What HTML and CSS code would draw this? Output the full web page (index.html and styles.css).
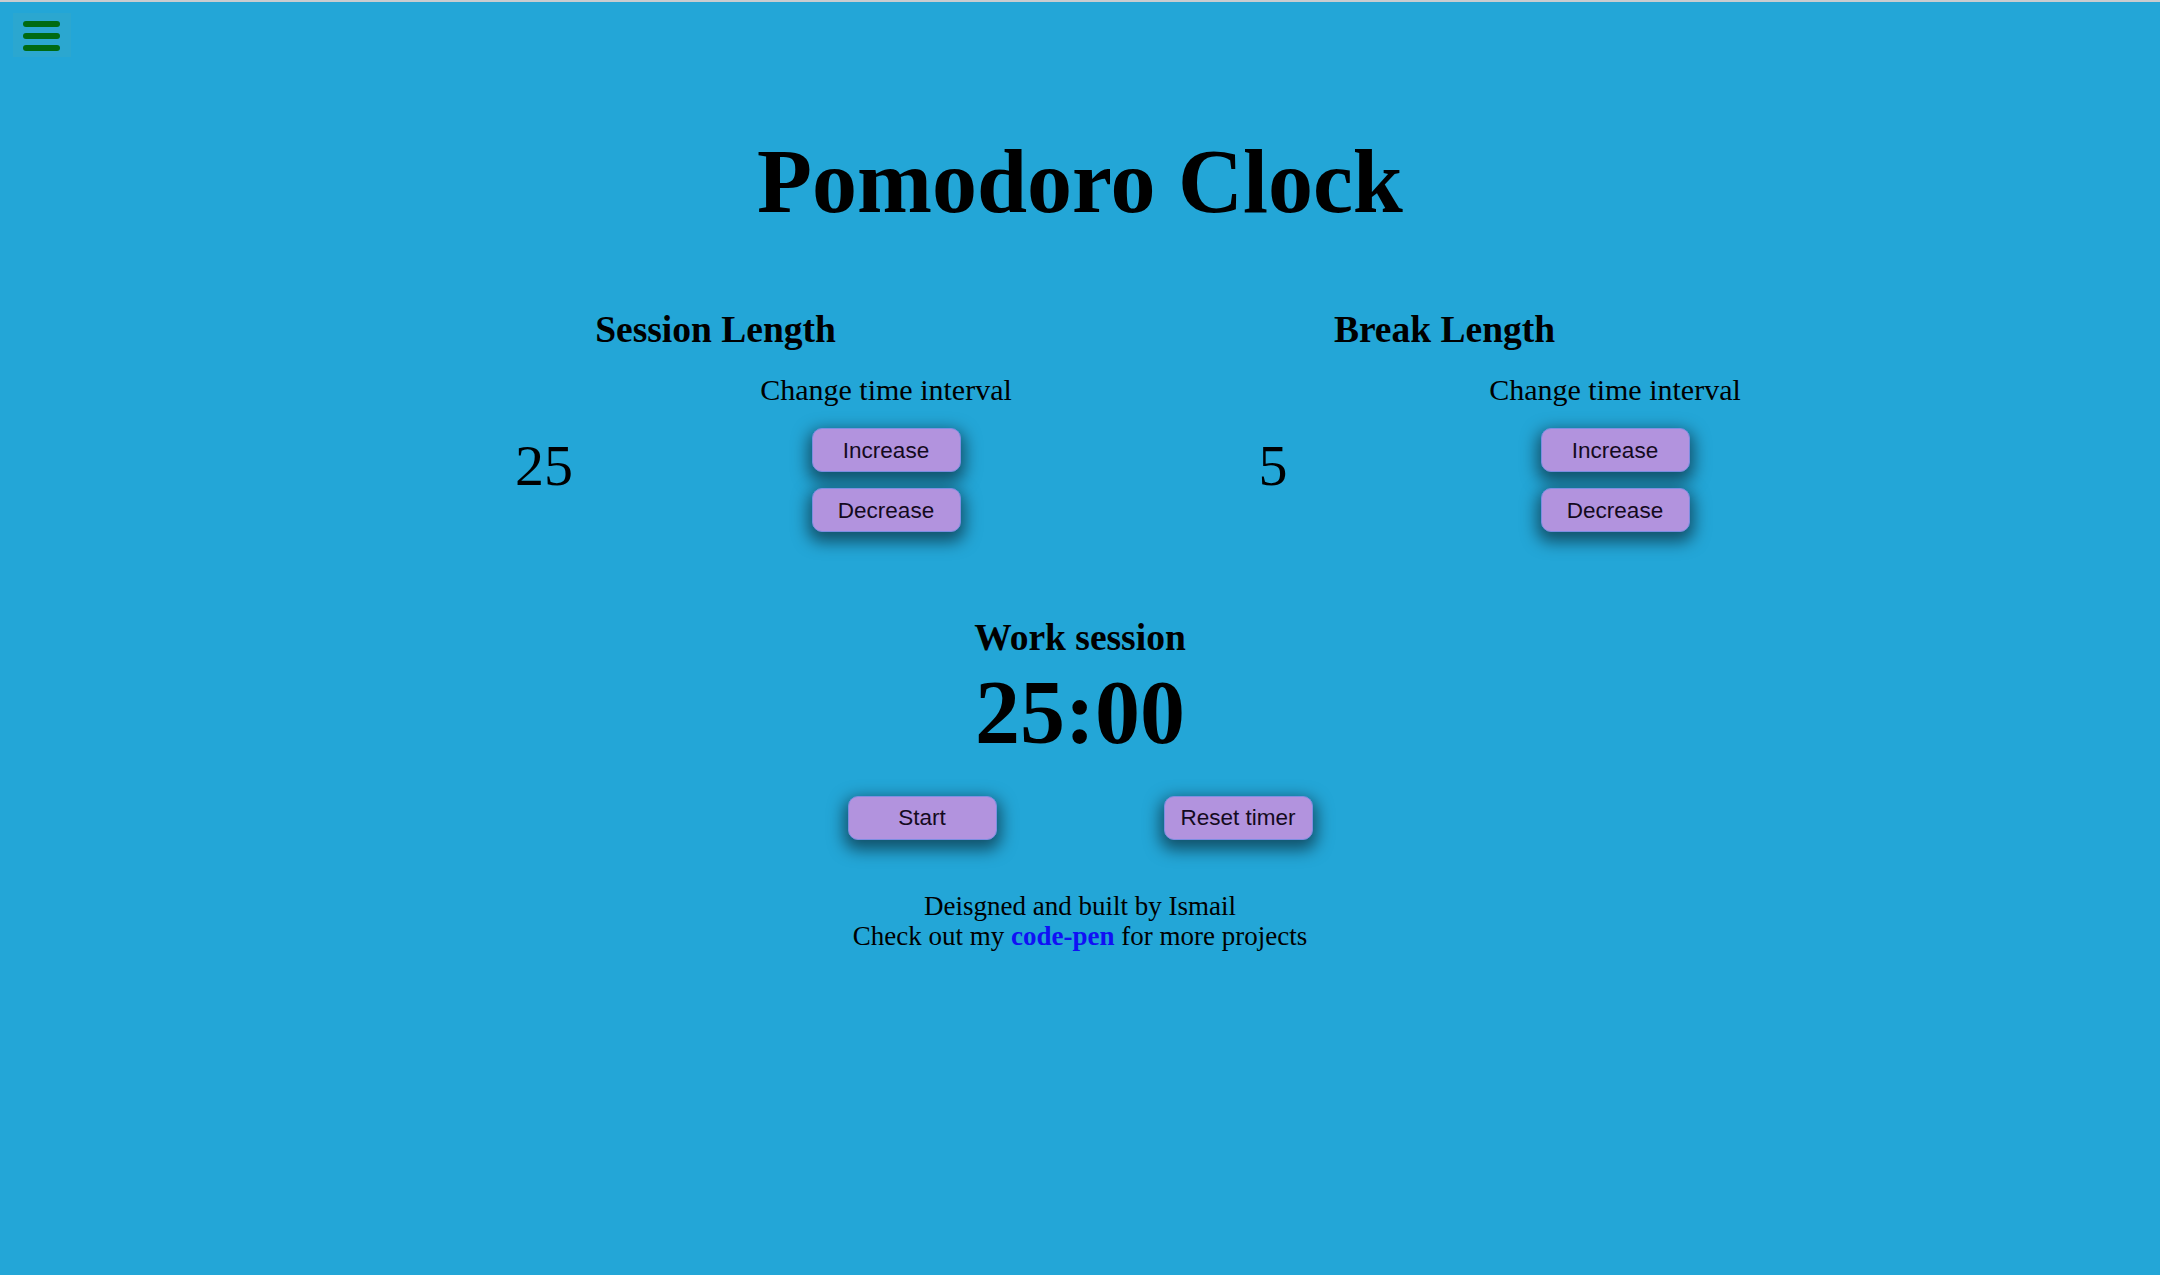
FILE: index.html
```html
<!DOCTYPE html>
<html lang="en">
<head>
<meta charset="utf-8">
<title>Pomodoro Clock</title>
<link rel="stylesheet" href="styles.css">
</head>
<body>
<div class="topline"></div>
<header class="topbar">
  <button class="menu" aria-label="Menu">
    <span class="bar"></span>
    <span class="bar"></span>
    <span class="bar"></span>
  </button>
</header>
<main class="app">
  <h1 class="title">Pomodoro Clock</h1>
  <section class="settings">
    <div class="setting">
      <h2 class="setting-title">Session Length</h2>
      <div class="setting-row">
        <div class="value">25</div>
        <div class="controls">
          <p class="controls-label">Change time interval</p>
          <button class="btn">Increase</button>
          <button class="btn">Decrease</button>
        </div>
      </div>
    </div>
    <div class="setting">
      <h2 class="setting-title">Break Length</h2>
      <div class="setting-row">
        <div class="value">5</div>
        <div class="controls">
          <p class="controls-label">Change time interval</p>
          <button class="btn">Increase</button>
          <button class="btn">Decrease</button>
        </div>
      </div>
    </div>
  </section>
  <section class="timer">
    <h2 class="timer-label">Work session</h2>
    <div class="timer-value">25:00</div>
    <div class="timer-actions">
      <button class="btn">Start</button>
      <button class="btn">Reset timer</button>
    </div>
  </section>
  <footer class="credits">
    <div>Deisgned and built by Ismail</div>
    <div>Check out my <a class="link" href="#">code-pen</a> for more projects</div>
  </footer>
</main>
</body>
</html>
```

FILE: styles.css
```css
html, body {
  margin: 0;
  padding: 0;
}

body {
  background: #23a6d7;
  color: #000;
  font-family: "Liberation Serif", "Times New Roman", serif;
  min-height: 1275px;
}

.topline {
  height: 2px;
  background: #c9cccf;
}

.topbar {
  padding: 11px 0 0 13px;
  height: 44px;
}

.menu {
  display: flex;
  flex-direction: column;
  gap: 6px;
  width: 58px;
  height: 44px;
  padding: 8px 11px 0 10px;
  box-sizing: border-box;
  border: none;
  background: #2ba7d0;
  cursor: pointer;
}

.bar {
  display: block;
  width: 37px;
  height: 6px;
  border-radius: 3px;
  background: #006a12;
}

.app {
  display: flex;
  flex-direction: column;
  align-items: center;
}

.title {
  margin: 73px 0 0;
  font-size: 90px;
  line-height: 1.15;
  font-weight: bold;
}

.settings {
  margin-top: 74px;
  width: 1458px;
  display: grid;
  grid-template-columns: 1fr 1fr;
}

.setting {
  display: flex;
  flex-direction: column;
  align-items: center;
}

.setting-title {
  margin: 0;
  font-size: 37.5px;
  line-height: 1.15;
  font-weight: bold;
}

.setting-row {
  margin-top: 22px;
  width: 100%;
  display: grid;
  grid-template-columns: 386px 298px;
}

.value {
  text-align: center;
  font-size: 58px;
  line-height: 1.15;
  padding-top: 60px;
}

.controls {
  display: flex;
  flex-direction: column;
  align-items: center;
}

.controls-label {
  margin: 0 0 21px;
  font-size: 30px;
  line-height: 1.15;
  white-space: nowrap;
}

.btn {
  width: 149px;
  height: 44px;
  margin: 0;
  padding: 1px 0 0;
  box-sizing: border-box;
  border: 1px solid #7d8ee2;
  border-radius: 10px;
  background: #b293de;
  color: #140a20;
  font-family: "Liberation Sans", Arial, sans-serif;
  font-size: 22.5px;
  box-shadow: 0 6px 16px 4px rgba(0, 0, 0, 0.5);
  cursor: pointer;
}

.controls .btn + .btn {
  margin-top: 16px;
}

.timer {
  margin-top: 84px;
  display: flex;
  flex-direction: column;
  align-items: center;
}

.timer-label {
  margin: 0;
  font-size: 37.5px;
  line-height: 1.15;
  font-weight: bold;
}

.timer-value {
  margin-top: 2px;
  font-size: 90px;
  line-height: 1.15;
  font-weight: bold;
}

.timer-actions {
  margin-top: 31px;
  display: flex;
  gap: 167px;
}

.credits {
  margin-top: 51px;
  font-size: 27px;
  line-height: 30px;
  text-align: center;
}

.link {
  color: #1010f5;
  font-weight: bold;
  text-decoration: none;
}
```
